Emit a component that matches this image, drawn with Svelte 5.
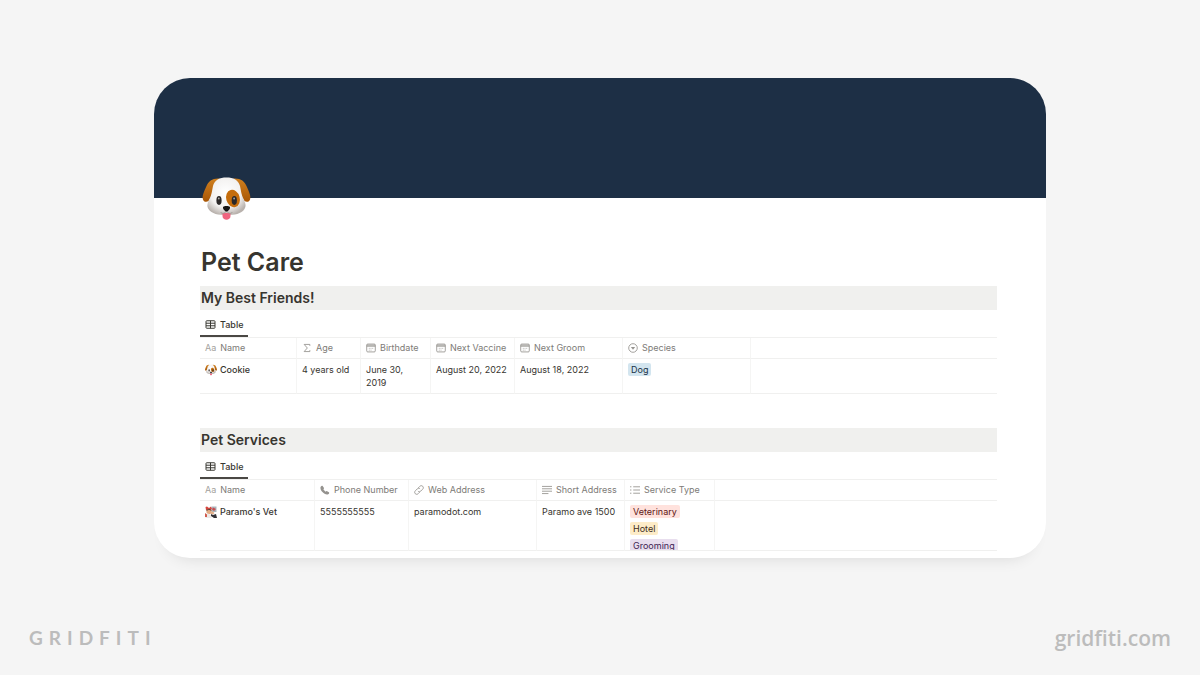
<script lang="ts">
  type Column = { label: string; icon: string; width: number | null };
  type Tag = { label: string; color: string };
  type Cell = { text?: string; tags?: Tag[]; emoji?: string };
  type Database = { title: string; columns: Column[]; rows: Cell[][] };

  const databases: Database[] = [
    {
      title: 'My Best Friends!',
      columns: [
        { label: 'Name', icon: 'title', width: 97 },
        { label: 'Age', icon: 'formula', width: 64 },
        { label: 'Birthdate', icon: 'date', width: 70 },
        { label: 'Next Vaccine', icon: 'date', width: 84 },
        { label: 'Next Groom', icon: 'date', width: 108 },
        { label: 'Species', icon: 'select', width: 128 },
        { label: '', icon: '', width: null },
      ],
      rows: [
        [
          { text: 'Cookie', emoji: 'dog' },
          { text: '4 years old' },
          { text: 'June 30, 2019' },
          { text: 'August 20, 2022' },
          { text: 'August 18, 2022' },
          { tags: [{ label: 'Dog', color: 'blue' }] },
          {},
        ],
      ],
    },
    {
      title: 'Pet Services',
      columns: [
        { label: 'Name', icon: 'title', width: 115 },
        { label: 'Phone Number', icon: 'phone', width: 94 },
        { label: 'Web Address', icon: 'link', width: 128 },
        { label: 'Short Address', icon: 'text', width: 88 },
        { label: 'Service Type', icon: 'list', width: 90 },
        { label: '', icon: '', width: null },
      ],
      rows: [
        [
          { text: "Paramo's Vet", emoji: 'vet' },
          { text: '5555555555' },
          { text: 'paramodot.com' },
          { text: 'Paramo ave 1500' },
          {
            tags: [
              { label: 'Veterinary', color: 'red' },
              { label: 'Hotel', color: 'yellow' },
              { label: 'Grooming', color: 'purple' },
            ],
          },
          {},
        ],
      ],
    },
  ];
</script>

{#snippet dog()}
  <svg class="dog" viewBox="0 0 48 44" aria-hidden="true">
    <defs>
      <radialGradient id="fur" cx="0.48" cy="0.4" r="0.62">
        <stop offset="0" stop-color="#ffffff" />
        <stop offset="0.65" stop-color="#f3f1f0" />
        <stop offset="1" stop-color="#b9b2ad" />
      </radialGradient>
      <linearGradient id="ear" x1="0" y1="0" x2="0" y2="1">
        <stop offset="0" stop-color="#d0801f" />
        <stop offset="1" stop-color="#a85605" />
      </linearGradient>
    </defs>
    <path fill="url(#ear)" d="M17 1.500C10 1 6 4 4 9C2 14-.5 18 .3 22C1 25 4 25.500 6 24L12 14Z" />
    <path fill="url(#ear)" d="M31 1.500C38 1 42 4 44 9C46 14 48.500 18 47.700 22C47 25 44 25.500 42 24L36 14Z" />
    <path fill="url(#fur)" d="M24 .5C31 .5 36 3 37.500 9C38.500 14 39 18 41 22C43 26 44 29 42 32C39 37 32 38 24 38C16 38 9 37 6 32C4 29 5 26 7 22C9 18 9.500 14 10.500 9C12 3 17 .5 24 .5Z" />
    <ellipse cx="30.500" cy="21.500" rx="6.800" ry="8.800" fill="#c56d0c" transform="rotate(-16 30.500 21.500)" />
    <ellipse cx="16.500" cy="23.500" rx="2.600" ry="4.400" fill="#2b2828" />
    <ellipse cx="31.800" cy="23.500" rx="2.600" ry="4.400" fill="#2b2828" />
    <circle cx="16.300" cy="21.500" r="0.9" fill="#aaa" />
    <circle cx="31.600" cy="21.500" r="0.9" fill="#aaa" />
    <path fill="#f0647f" d="M20 36H28V39C28 44 20 44 20 39Z" />
    <path fill="none" stroke="#a29b96" d="M24 33C23 37 19 37 18 35M24 33C25 37 29 37 30 35" />
    <path fill="#171515" d="M20.500 30C22 28.600 26 28.600 27.500 30C28 32 25.500 34.500 24 34.500C22.500 34.500 20 32 20.500 30Z" />
  </svg>
{/snippet}

{#snippet vet()}
  <svg class="vet" viewBox="0 0 12 12" aria-hidden="true">
    <path fill="#a9b6bd" d="M6.500 0.500H11.500V6H6.500Z" />
    <path fill="#d5473f" d="M0.500 1L2 .5L4 2L6 .5L7 3L5 4.500L1 4Z" />
    <circle cx="4" cy="5.500" r="2.600" fill="#e2ab83" />
    <path fill="#55372d" d="M1.200 5C1.500 2.500 6 2 6.800 5L4 3.800Z" />
    <path fill="#c94c50" d="M8 1.500L11 3L9 5L7 3.500Z" />
    <path fill="#ece9e6" d="M.5 8L3 7.500L6 9L6.500 12H.5Z" />
    <path fill="#d25b4e" d="M0 7L2 8.500V11H0Z" />
    <path fill="#e4b28e" d="M6 6L8 5.500L9.500 7L8 8.500L6 8Z" />
    <path fill="#333137" d="M6 8L8 9L11 8L12 12H9L6 10Z" />
  </svg>
{/snippet}

{#snippet icon(name: string)}
  <svg class="icon" viewBox="0 0 14 14" aria-hidden="true">
    {#if name === 'formula'}
      <path d="M11 4V2H3L7.500 7L3 12H11V10" />
    {:else if name === 'date'}
      <rect x="1" y="1.500" width="12" height="11" rx="1.500" />
      <path d="M1 3H13M1 4.500H13" />
      <path d="M4 7.500H5M6.500 7.500H7.500M9 7.500H10M4 10H5M6.500 10H7.500" />
    {:else if name === 'select'}
      <circle cx="7" cy="7" r="6" />
      <path class="solid" d="M4 5.500H10L7 9.500Z" />
    {:else if name === 'phone'}
      <path class="solid" d="M1 2.500C2 1 3 .8 3.700 1.500L5.400 4C5.800 4.700 5.600 5.200 4.700 6C5.400 7.400 6.600 8.600 8 9.300C8.800 8.400 9.300 8.200 10 8.600L12.500 10.300C13.200 11 13 12 11.500 13C9 14.400 5.500 12 3.800 10.200C2 8.500-.3 5 1 2.500Z" />
    {:else if name === 'link'}
      <path d="M6 4L8 2C9.500.5 11 .7 12.200 1.800C13.300 3 13.500 4.500 12 6L9.500 8.500C8 10 6.500 9.500 5.500 8.500" />
      <path d="M8 10L6 12C4.500 13.500 3 13.300 1.800 12.200C.7 11 .5 9.500 2 8L4.500 5.500C6 4 7.500 4.500 8.500 5.500" />
    {:else if name === 'text'}
      <path d="M0 2H14M0 5.300H14M0 8.700H14M0 12H9" />
    {:else if name === 'list'}
      <path d="M4.500 2.500H14M4.500 7H14M4.500 11.500H14M0 2.500H2M0 7H2M0 11.500H2" />
    {/if}
  </svg>
{/snippet}

<div class="page">
  <main class="card">
    <div class="cover"></div>
    <div class="content">
      <div class="page-icon">{@render dog()}</div>
      <h1>Pet Care</h1>

      {#each databases as db}
        <section>
          <h2>{db.title}</h2>
          <div class="views">
            <button class="view" type="button">
              <svg viewBox="0 0 14 12" aria-hidden="true">
                <rect x="1" y="1" width="12" height="10" rx="1" />
                <path d="M1 4.300H13M1 7.700H13M7 1V11" />
              </svg>
              Table
            </button>
          </div>
          <table>
            <colgroup>
              {#each db.columns as column}
                <col style={column.width ? `width: ${column.width}px` : ''} />
              {/each}
            </colgroup>
            <thead>
              <tr>
                {#each db.columns as column}
                  <th>
                    {#if column.label}
                      <div class="head">
                        {#if column.icon === 'title'}
                          <span class="aa">Aa</span>
                        {:else}
                          {@render icon(column.icon)}
                        {/if}
                        {column.label}
                      </div>
                    {/if}
                  </th>
                {/each}
              </tr>
            </thead>
            <tbody>
              {#each db.rows as row}
                <tr>
                  {#each row as cell}
                    <td>
                      {#if cell.tags}
                        <div class="tags">
                          {#each cell.tags as tag}
                            <span class="tag {tag.color}">{tag.label}</span>
                          {/each}
                        </div>
                      {:else if cell.emoji}
                        <div class="name">
                          {#if cell.emoji === 'dog'}
                            {@render dog()}
                          {:else}
                            {@render vet()}
                          {/if}
                          {cell.text}
                        </div>
                      {:else}
                        {cell.text ?? ''}
                      {/if}
                    </td>
                  {/each}
                </tr>
              {/each}
            </tbody>
          </table>
        </section>
      {/each}
    </div>
  </main>

  <footer>
    <span class="brand">GRIDFITI</span>
    <span class="site">gridfiti.com</span>
  </footer>
</div>

<style>
  :global(body) {
    margin: 0;
    background: #f5f5f5;
  }

  .page {
    display: flex;
    flex-direction: column;
    justify-content: space-between;
    box-sizing: border-box;
    min-height: 100vh;
    padding: 78px 29px 23px;
    font-family: Inter, 'Liberation Sans', sans-serif;
    color: #37352f;
  }

  .card {
    width: 100%;
    max-width: 892px;
    margin: 0 auto;
    overflow: hidden;
    background: #fff;
    border-radius: 36px;
    box-shadow: 0 14px 16px -14px rgba(0, 0, 0, 0.12);
  }

  .cover {
    height: 120px;
    background: #1d2f45;
  }

  .content {
    padding: 0 49px 7px 46px;
  }

  .page-icon {
    position: relative;
    height: 48px;
    margin-top: -21px;
    padding-left: 2px;
  }

  .page-icon .dog {
    display: block;
    width: 49px;
    height: 44px;
  }

  h1 {
    margin: 20px 0 7px;
    padding-left: 1px;
    font-size: 25px;
    line-height: 34px;
    font-weight: 600;
  }

  section + section {
    margin-top: 34px;
  }

  h2 {
    margin: 0;
    padding-left: 1px;
    font-size: 14px;
    line-height: 24px;
    font-weight: 600;
    background: #f0f0ee;
  }

  .views {
    display: flex;
    height: 27px;
    border-bottom: 1px solid #f0f0ef;
  }

  .view {
    display: flex;
    align-items: center;
    gap: 4px;
    height: 27px;
    padding: 4px 5px 0;
    border: 0;
    border-bottom: 2px solid #4a4844;
    background: none;
    font: 500 9px/14px Inter, 'Liberation Sans', sans-serif;
    color: #37352f;
  }

  .view svg {
    width: 11px;
    height: 9px;
    fill: none;
    stroke: #37352f;
    stroke-width: 1.3;
  }

  table {
    width: 100%;
    table-layout: fixed;
    border-collapse: separate;
    border-spacing: 0;
    font-size: 9px;
    line-height: 13px;
  }

  th,
  td {
    box-sizing: border-box;
    padding: 4px 5px;
    border-right: 1px solid #f5f5f4;
    border-bottom: 1px solid #f0f0ef;
    text-align: left;
    vertical-align: top;
  }

  th:last-child,
  td:last-child {
    border-right: 0;
  }

  th {
    height: 21px;
    padding-top: 3px;
    font-weight: 400;
    color: #7d7b77;
    white-space: nowrap;
  }

  td {
    height: 35px;
  }

  .head {
    display: flex;
    align-items: center;
    gap: 4px;
  }

  .aa {
    color: #a3a19d;
  }

  .icon {
    flex: none;
    width: 10px;
    height: 10px;
    fill: none;
    stroke: #94928e;
    stroke-width: 1.2;
  }

  .icon .solid {
    fill: #94928e;
    stroke: none;
  }

  .name {
    display: flex;
    align-items: center;
    gap: 3px;
    font-weight: 500;
  }

  .name svg {
    flex: none;
    width: 12px;
    height: 12px;
  }

  .tags {
    display: flex;
    flex-direction: column;
    align-items: flex-start;
    gap: 4px;
    max-height: 45px;
    margin-bottom: -4px;
    overflow: hidden;
  }

  .tag {
    flex: none;
    padding: 0 3px;
    border-radius: 2px;
  }

  .blue {
    background: #d3e5ef;
    color: #183347;
  }

  .red {
    background: #ffe2dd;
    color: #5d1715;
  }

  .yellow {
    background: #fdecc8;
    color: #402c1b;
  }

  .purple {
    background: #e8deee;
    color: #412454;
  }

  footer {
    display: flex;
    justify-content: space-between;
    align-items: center;
    line-height: 28px;
    color: #bcbcbc;
  }

  .brand {
    font-family: Lato, sans-serif;
    font-size: 19px;
    font-weight: 700;
    letter-spacing: 6px;
  }

  .site {
    font-family: 'Open Sans', sans-serif;
    font-size: 21px;
    font-weight: 600;
  }
</style>
